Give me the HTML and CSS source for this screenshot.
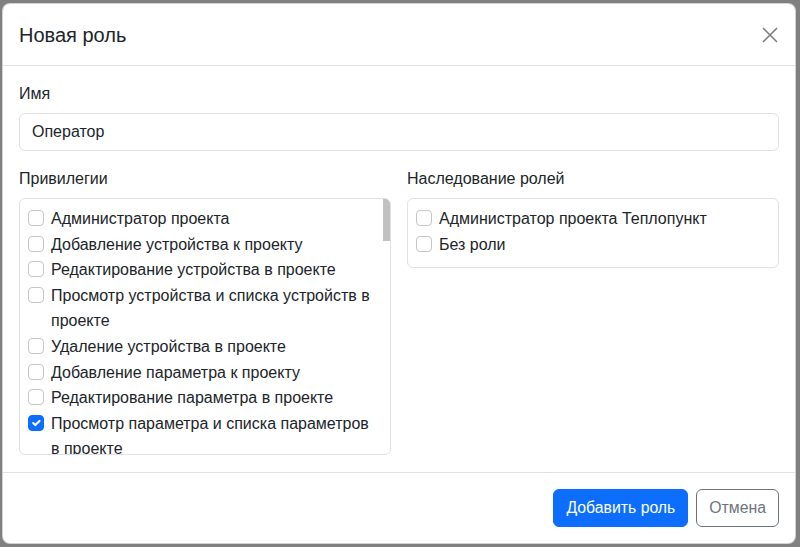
FILE: index.html
```html
<!DOCTYPE html>
<html lang="ru">
<head>
    <meta charset="UTF-8">
    <meta name="viewport" content="width=device-width, initial-scale=1.0">
    <title>Новая роль</title>
    <link rel="stylesheet" href="styles.css">
</head>
<body>
    <div class="modal-content">
        <div class="modal-header">
            <h5 class="modal-title">Новая роль</h5>
            <button type="button" class="btn-close" aria-label="Закрыть">
                <svg width="16" height="16" viewBox="0 0 16 16"><path d="M1 1L15 15M15 1L1 15" stroke="#000" stroke-width="1.6" fill="none"/></svg>
            </button>
        </div>
        <div class="modal-body">
            <label class="form-label" for="role-name">Имя</label>
            <input type="text" id="role-name" class="form-control" value="Оператор">
            <div class="cols">
                <div>
                    <label class="form-label">Привилегии</label>
                    <div class="check-list scroll">
                        <div id="privileges"></div>
                        <div class="scroll-thumb"></div>
                    </div>
                </div>
                <div>
                    <label class="form-label">Наследование ролей</label>
                    <div class="check-list">
                        <label class="form-check"><input type="checkbox" class="form-check-input">Администратор проекта Теплопункт</label>
                        <label class="form-check"><input type="checkbox" class="form-check-input">Без роли</label>
                    </div>
                </div>
            </div>
        </div>
        <div class="modal-footer">
            <button type="button" class="btn btn-primary">Добавить роль</button>
            <button type="button" class="btn btn-outline-secondary">Отмена</button>
        </div>
    </div>

    <script>
        // Build privilege list: admin + CRUD for each entity
        var entities = [
            ['устройства', 'устройств'],
            ['параметра', 'параметров'],
            ['пользователя', 'пользователей'],
            ['роли', 'ролей'],
            ['отчёта', 'отчётов'],
            ['события', 'событий'],
            ['мнемосхемы', 'мнемосхем'],
            ['группы', 'групп'],
            ['тревоги', 'тревог'],
            ['архива', 'архивов'],
            ['шаблона', 'шаблонов'],
            ['графика', 'графиков'],
            ['объекта', 'объектов'],
            ['канала', 'каналов']
        ];
        var items = ['Администратор проекта'];
        entities.forEach(function(e) {
            items.push('Добавление ' + e[0] + ' к проекту');
            items.push('Редактирование ' + e[0] + ' в проекте');
            items.push('Просмотр ' + e[0] + ' и списка ' + e[1] + ' в проекте');
            items.push('Удаление ' + e[0] + ' в проекте');
        });
        var checked = ['Просмотр параметра и списка параметров в проекте'];
        var list = document.getElementById('privileges');
        items.forEach(function(text) {
            var row = document.createElement('label');
            row.className = 'form-check';
            row.innerHTML = '<input type="checkbox" class="form-check-input"' +
                (checked.indexOf(text) >= 0 ? ' checked' : '') + '>' + text;
            list.appendChild(row);
        });
    </script>
</body>
</html>
```

FILE: styles.css
```css
* { box-sizing: border-box; }
html, body { height: 100%; }
body { margin: 0; padding: 3px 4px 3px 2px; background: #808080; font-family: "Liberation Sans", Arial, sans-serif; font-size: 16px; line-height: 1.5; color: #212529; }

.modal-content { background: #fff; border: 1px solid rgba(0,0,0,.175); border-radius: 8px; height: 541px; display: flex; flex-direction: column; }
.modal-header { display: flex; align-items: center; justify-content: space-between; padding: 16px 16px 15px; border-bottom: 1px solid #dee2e6; }
.modal-title { margin: 0; font-size: 20px; font-weight: 400; line-height: 1.5; }
.btn-close { border: 0; background: none; padding: 4px; margin-right: -3px; opacity: .5; cursor: pointer; display: flex; }

.modal-body { flex: 1; padding: 16px; }
.form-label { display: block; margin-bottom: 7px; }
.form-control { display: block; width: 100%; height: 38px; padding: 6px 12px; font: inherit; color: #212529; border: 1px solid #dee2e6; border-radius: 6px; margin-bottom: 16px; }

.cols { display: grid; grid-template-columns: 1fr 1fr; gap: 16px; align-items: start; }
.check-list { border: 1px solid #dee2e6; border-radius: 6px; padding: 7px 8px 10px; line-height: 1.6; }
.check-list.scroll { position: relative; height: 257px; overflow: hidden; padding-right: 16px; }
.scroll-thumb { position: absolute; top: 0; right: 0; width: 7px; height: 42px; background: #c1c1c1; }

.form-check { display: block; padding-left: 23px; }
.form-check-input { float: left; appearance: none; -webkit-appearance: none; width: 16px; height: 16px; margin: 4px 0 0 -23px; border: 1px solid #c4c6c8; border-radius: 4px; background: #fff; }
.form-check-input:checked { background: #0d6efd url("data:image/svg+xml,%3csvg xmlns='http://www.w3.org/2000/svg' viewBox='0 0 20 20'%3e%3cpath fill='none' stroke='%23fff' stroke-linecap='round' stroke-linejoin='round' stroke-width='3' d='m6 10 3 3 6-6'/%3e%3c/svg%3e") center / 100% no-repeat; border-color: #0d6efd; }

.modal-footer { display: flex; justify-content: flex-end; align-items: center; padding: 12px; border-top: 1px solid #dee2e6; }
.btn { margin: 4px; padding: 6px 12px; font: inherit; font-size: 15.8px; line-height: 24px; border-radius: 6px; border: 1px solid transparent; cursor: pointer; }
.btn-primary { background: #0d6efd; border-color: #0d6efd; color: #fff; }
.btn-outline-secondary { background: #fff; border-color: #6c757d; color: #6c757d; }
```
